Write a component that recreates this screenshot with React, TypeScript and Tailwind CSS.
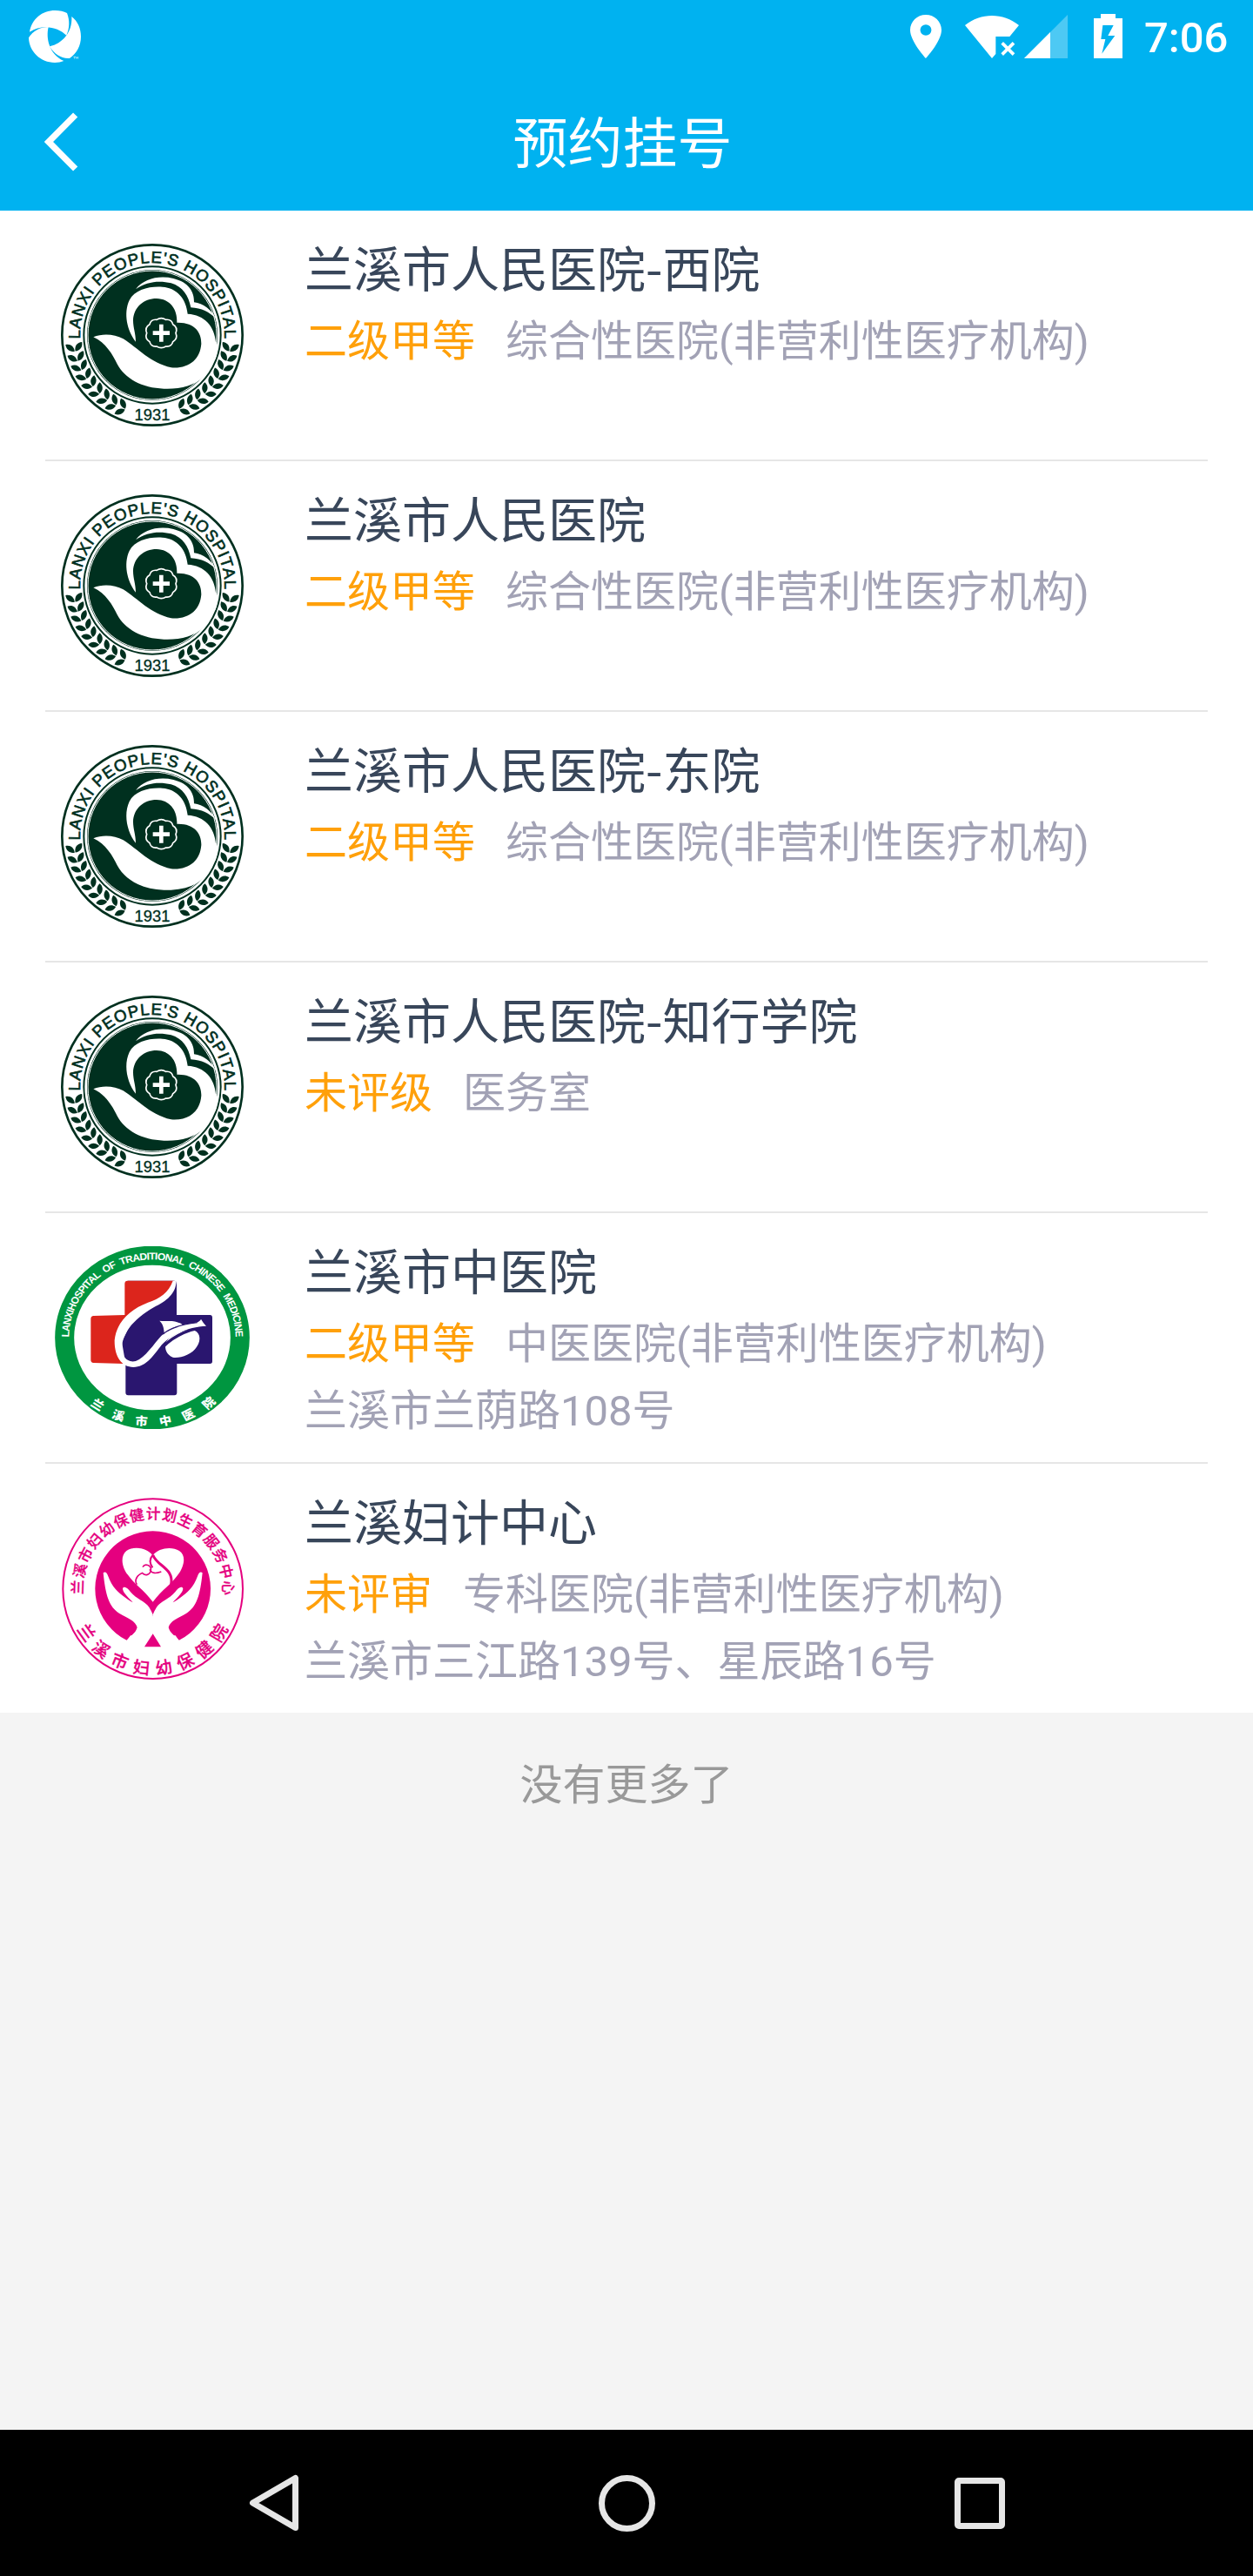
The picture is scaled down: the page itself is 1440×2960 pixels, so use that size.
import React from "react";

const rad = (d: number) => (d * Math.PI) / 180;

/** Arc around (cx, cy); angles in degrees, measured clockwise from the right. */
function arc(cx: number, cy: number, r: number, from: number, to: number) {
  const x0 = cx + r * Math.cos(rad(from));
  const y0 = cy + r * Math.sin(rad(from));
  const x1 = cx + r * Math.cos(rad(to));
  const y1 = cy + r * Math.sin(rad(to));
  const large = Math.abs(to - from) > 180 ? 1 : 0;
  const sweep = to > from ? 1 : 0;
  return `M${x0} ${y0}A${r} ${r} 0 ${large} ${sweep} ${x1} ${y1}`;
}

const LEAVES = [171, 163.7, 156.5, 149.2, 142, 134.7, 127.5, 120.2, 113];

function LeafPair({ angle, flip }: { angle: number; flip: boolean }) {
  return (
    <g transform={`${flip ? "translate(750 0) scale(-1 1) " : ""}rotate(${angle} 375 375) translate(648 378) scale(1.1)`}>
      <path d="M0 -15C14 -16 26 -6 25 10C10 11 0 2 0 -15Z" />
      <path d="M-2 -15C-16 -16 -28 -6 -27 10C-12 11 -2 2 -2 -15Z" />
    </g>
  );
}

function PeoplesHospitalLogo({ id }: { id: string }) {
  const c = "#00301f";
  return (
    <svg className="h-[210px] w-[224px] shrink-0" viewBox="39 60 672 630">
      <circle cx="375" cy="375" r="311" fill="#fff" stroke={c} strokeWidth="8" />
      <circle cx="375" cy="375" r="236" fill="none" stroke={c} strokeWidth="6" />
      <circle cx="375" cy="375" r="225" fill={c} />
      <circle cx="375" cy="375" r="222" fill="none" stroke="#fff" strokeWidth="3" />
      <path
        d="M318 217C345 180 400 168 448 180C500 193 520 225 519 262C550 266 580 288 594 318C572 296 545 282 508 280C500 240 480 208 440 196C400 186 355 190 318 217Z"
        fill="#fff"
      />
      <path
        d="M318 398C288 360 275 300 296 255C315 218 365 206 410 209C460 212 492 250 497 302C555 305 590 345 594 400C596 440 582 485 552 518C520 550 470 562 415 560C340 558 280 525 254 475C238 442 215 402 172 382C205 368 245 372 275 388C325 420 370 472 440 487C500 492 540 460 544 405C545 365 520 330 460 332C462 285 435 250 390 249C345 249 310 280 309 325C309 350 318 370 318 398Z"
        fill="#fff"
      />
      <path d="M594 395C602 415 600 440 592 460L585 440Z" fill="#fff" />
      <path
        d="M390 322Q406 312 422 322Q442 320 446 338Q464 348 456 368Q464 388 446 398Q442 416 422 414Q406 424 390 414Q370 416 366 398Q348 388 356 368Q348 348 366 338Q370 320 390 322Z"
        fill="none"
        stroke="#fff"
        strokeWidth="5"
      />
      <path d="M399 338h14v23h22v14h-22v23h-14v-23h-22v-14h22z" fill="#fff" />
      <path id={`${id}-top`} d={arc(375, 375, 249, 175, 365)} fill="none" />
      <text fill={c} className="font-['Liberation_Sans'] text-[56px]" textLength="808" stroke={c} strokeWidth="2">
        <textPath href={`#${id}-top`} startOffset="8">LANXI PEOPLE'S HOSPITAL</textPath>
      </text>
      <text x="375" y="668" textAnchor="middle" fill={c} stroke={c} className="font-['Liberation_Sans'] text-[55px]">
        1931
      </text>
      <g fill={c}>
        {LEAVES.map((a) => (
          <React.Fragment key={a}>
            <LeafPair angle={a} flip={false} />
            <LeafPair angle={a} flip />
          </React.Fragment>
        ))}
      </g>
    </svg>
  );
}

function ChineseMedicineLogo() {
  return (
    <svg className="h-[210px] w-[224px] shrink-0" viewBox="39 51 672 630">
      <ellipse cx="375" cy="366" rx="302.5" ry="283" fill="#fff" stroke="#009640" strokeWidth="66" />
      <path
        d="M290 170H450Q459 170 459 180V288H574Q582 288 582 297V448Q582 456 574 456H460V556Q460 565 451 565H292Q283 565 283 556V456L270 380L320 280Z"
        fill="#2a166f"
      />
      <path
        d="M290 170H448C440 205 420 225 390 242C340 258 270 300 255 350C250 390 255 430 275 456L172 453Q163 452 163 443V302Q163 291 173 291L280 288V180Q280 170 290 170Z"
        fill="#dc251c"
      />
      <path d="M422 384C432 360 475 340 510 338C540 342 546 372 528 398C512 424 470 438 446 434C424 426 416 404 422 384Z" fill="#fff" />
      <path d="M400 412C432 370 490 338 552 331" fill="none" stroke="#2a166f" strokeWidth="10" />
      <path
        d="M446 170C432 210 400 232 360 245C300 268 252 310 245 375C244 430 268 468 310 468C352 466 376 432 402 398C430 362 490 330 561 326C553 318 549 312 543 302C538 312 530 314 508 317C466 322 428 340 406 360C380 388 352 434 318 447C285 454 268 428 271 392C276 340 322 296 380 262C425 240 456 215 458 172Z"
        fill="#fff"
      />
      <path d="M400 308C425 312 440 305 458 312C472 316 478 318 480 324C455 326 436 336 417 356C414 340 416 322 400 308Z" fill="#fff" />
      <path d="M412 354C440 330 478 320 530 314" fill="none" stroke="#2a166f" strokeWidth="4" />
      <g transform="translate(375 366) scale(1.067 1)">
        <path id="tcm-top" d={arc(0, 0, 269, 175, 365)} fill="none" />
        <path id="tcm-bottom" d={arc(0, 0, 304, 150, 30)} fill="none" />
        <text
          fill="#fff"
          className="font-['Liberation_Sans'] text-[34px] font-bold [word-spacing:9px]"
          textLength="842"
        >
          <textPath href="#tcm-top" startOffset="25">LANXIHOSPITAL OF TRADITIONAL CHINESE MEDICINE</textPath>
        </text>
        <text
          fill="#fff"
          textAnchor="middle"
          className="font-['Noto_Sans_CJK_SC'] text-[40px] font-black tracking-[41px]"
        >
          <textPath href="#tcm-bottom" startOffset="54%">兰溪市中医院</textPath>
        </text>
      </g>
    </svg>
  );
}

function MaternityLogo() {
  const c = "#e5007f";
  const hand =
    "M206 322C213 316 219 322 223 334C236 370 258 392 282 407C292 414 300 420 308 424C298 412 272 390 273 376C278 366 290 374 300 388C320 412 350 420 364 440C370 450 374 458 377 466V534C362 552 352 564 349 576H300L288 554C300 540 318 530 323 510C318 488 290 478 262 462C226 440 214 400 206 322Z";
  return (
    <svg className="h-[210px] w-[224px] shrink-0" viewBox="39 60 672 630">
      <circle cx="377" cy="377" r="310" fill="#fff" stroke={c} strokeWidth="6" />
      <path d={`${arc(377, 377, 199, 117, 423)}L377 470Z`} fill={c} />
      <path d="M288 554L300 538H455L466 554L440 580H310Z" fill="#fff" />
      <path d={hand} fill="#fff" />
      <path d={hand} fill="#fff" transform="translate(754 0) scale(-1 1)" />
      <path d="M377 532L405 577H348Z" fill={c} />
      <path
        d="M377 262C358 236 312 228 286 246C262 266 272 305 290 328C312 360 345 380 377 422C409 380 442 360 464 328C484 302 494 262 468 246C442 230 396 236 377 262Z"
        fill="#fff"
      />
      <path d="M377 260C392 300 450 305 440 362" fill="none" stroke={c} strokeWidth="9" />
      <path d="M377 260C364 275 366 290 376 304" fill="none" stroke={c} strokeWidth="6" />
      <path
        d="M342 302C350 288 372 296 370 312C368 330 350 334 340 322M342 322C322 330 312 348 322 362M366 310C374 326 388 324 406 318"
        fill="none"
        stroke={c}
        strokeWidth="5"
      />
      <path id="mat-top" d={arc(377, 377, 241, 165, 375)} fill="none" />
      <path id="mat-bottom" d={arc(377, 377, 295, 170, 10)} fill="none" />
      <text
        fill={c}
        stroke={c}
        textAnchor="middle"
        className="font-['Noto_Sans_CJK_SC'] text-[50px] font-medium tracking-[3.4px]"
      >
        <textPath href="#mat-top" startOffset="50.3%">兰溪市妇幼保健计划生育服务中心</textPath>
      </text>
      <text
        fill={c}
        stroke={c}
        textAnchor="middle"
        className="font-['Noto_Sans_CJK_SC'] text-[58px] font-medium tracking-[25px]"
      >
        <textPath href="#mat-bottom" startOffset="51.5%">兰溪市妇幼保健院</textPath>
      </text>
    </svg>
  );
}

interface Hospital {
  name: string;
  level: string;
  kind: string;
  address?: string;
  logo: React.ReactNode;
}

const HOSPITALS: Hospital[] = [
  { name: "兰溪市人民医院-西院", level: "二级甲等", kind: "综合性医院(非营利性医疗机构)", logo: <PeoplesHospitalLogo id="west" /> },
  { name: "兰溪市人民医院", level: "二级甲等", kind: "综合性医院(非营利性医疗机构)", logo: <PeoplesHospitalLogo id="main" /> },
  { name: "兰溪市人民医院-东院", level: "二级甲等", kind: "综合性医院(非营利性医疗机构)", logo: <PeoplesHospitalLogo id="east" /> },
  { name: "兰溪市人民医院-知行学院", level: "未评级", kind: "医务室", logo: <PeoplesHospitalLogo id="college" /> },
  { name: "兰溪市中医院", level: "二级甲等", kind: "中医医院(非营利性医疗机构)", address: "兰溪市兰荫路108号", logo: <ChineseMedicineLogo /> },
  { name: "兰溪妇计中心", level: "未评审", kind: "专科医院(非营利性医疗机构)", address: "兰溪市三江路139号、星辰路16号", logo: <MaternityLogo /> },
];

function StatusBar() {
  return (
    <div className="flex h-[84px] items-start pl-[33px] pr-[29px]">
      <svg className="mt-3 h-[60px] w-[61px]" viewBox="99 36 183 180" fill="#fff">
        <path d="M102 110C110 65 145 36 190 36C206 36 220 40 231 45C241 70 240 98 229 122C200 92 145 82 102 110Z" />
        <path d="M247 57C268 73 279 98 279 126C279 158 264 185 240 201C214 204 186 186 171 160C215 150 250 112 247 57Z" />
        <path d="M167 93C158 130 168 186 220 210C211 214 200 216 189 216C140 216 100 178 99 130C114 106 138 93 167 93Z" />
        <path d="M253 196h8M257 196v7M263 203v-7l3 4l3 -4v7" fill="none" stroke="#fff" strokeWidth="1.6" />
      </svg>
      <div className="ml-auto flex items-start">
        <svg className="mt-[17px] h-[50px] w-9" viewBox="5 2 14 20" preserveAspectRatio="none" fill="#fff">
          <path d="M12 2C8.13 2 5 5.13 5 9c0 5.25 7 13 7 13s7-7.75 7-13c0-3.87-3.13-7-7-7zm0 9.5a2.5 2.5 0 1 1 0-5 2.5 2.5 0 0 1 0 5z" />
        </svg>
        <svg className="ml-[27px] mt-[17px] h-[50px] w-[62px]" viewBox="267 51 186 150" fill="#fff">
          <path d="M267 87C322 43 398 43 453 87L421 126H373V186L360 201Z" />
          <path d="M395 148L435 188M435 148L395 188" stroke="#fff" strokeWidth="11" />
        </svg>
        <svg className="ml-[6px] mt-[17px] h-[50px] w-[50px]" viewBox="471 51 150 150" fill="#fff">
          <path d="M621 51V201H471Z" fillOpacity="0.3" />
          <path d="M561 111V201H471Z" />
        </svg>
        <svg className="ml-[30px] mt-4 h-[51px] w-[33px]" viewBox="711 48 99 153" fill="#fff">
          <path fillRule="evenodd" d="M735 48H786V63H810V201H711V63H735ZM742 87H779L760 123H784L739 185L751 135H736Z" />
        </svg>
        <span className="ml-[25px] mt-[15px] w-[96px] whitespace-nowrap text-[49px] font-medium leading-[57px] text-white">
          7:06
        </span>
      </div>
    </div>
  );
}

function Row({ h, last }: { h: Hospital; last: boolean }) {
  return (
    <li className={`flex pl-[63px] pr-[52px] ${last ? "h-[286px]" : "h-[288px]"}`}>
      <div className="pt-[38px]">{h.logo}</div>
      <div className="relative ml-[63px] flex-1 whitespace-nowrap pt-[31px]">
        <p className="h-[81px] font-['Noto_Sans_CJK_SC',sans-serif] text-[56px] leading-[66px] text-[#38465a]">{h.name}</p>
        <p className="flex h-[77px] gap-[35px] text-[49px] leading-[77px]">
          <span className="text-[#ffa00a]">{h.level}</span>
          <span className="text-[#a2a2b5]">{h.kind}</span>
        </p>
        {h.address && <p className="text-[49px] leading-[77px] text-[#a2a2b5]">{h.address}</p>}
        {!last && <span className="absolute -left-[298px] bottom-0 right-0 h-[2px] bg-[#e6e6e6]" />}
      </div>
    </li>
  );
}

export default function App() {
  return (
    <div className="flex h-[2960px] w-[1440px] flex-col bg-[#f4f4f4] font-['Roboto','Noto_Sans_CJK_SC',sans-serif]">
      <header className="h-[242px] bg-[#00b2f0]">
        <StatusBar />
        <div className="grid h-[158px] grid-cols-[120px_1fr_129px] items-center">
          <svg className="ml-[51px] h-[68px] w-[39px]" viewBox="153 389 117 204">
            <path d="M260 398L168 491L260 584" fill="none" stroke="#fff" strokeWidth="22" />
          </svg>
          <h1 className="pt-[6px] text-center text-[63px] leading-[74px] text-white">预约挂号</h1>
        </div>
      </header>
      <ul className="bg-white">
        {HOSPITALS.map((h, i) => (
          <Row key={h.name} h={h} last={i === HOSPITALS.length - 1} />
        ))}
      </ul>
      <p className="mt-[44px] text-center text-[49px] leading-[80px] text-[#999]">没有更多了</p>
      <nav className="mt-auto flex h-[168px] items-center bg-black pl-[286px] pr-[284px]">
        <svg className="h-[66px] w-[58px]" viewBox="0 0 58 66">
          <path d="M53.500 4.500V61.500L4.500 33Z" fill="none" stroke="#e6e6e6" strokeWidth="7" strokeLinejoin="round" />
        </svg>
        <span className="ml-[344px] h-[65px] w-[65px] rounded-full border-[7px] border-[#e6e6e6]" />
        <span className="ml-[344px] h-[59px] w-[58px] rounded-[5px] border-[7px] border-[#e6e6e6]" />
      </nav>
    </div>
  );
}
